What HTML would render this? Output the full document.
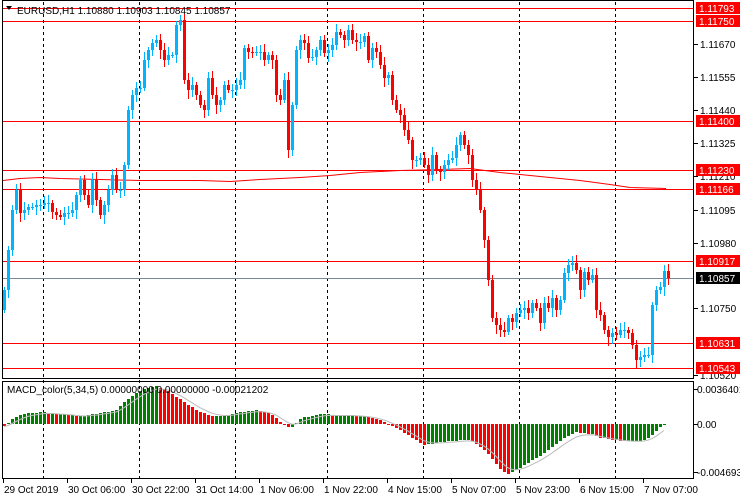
<!DOCTYPE html>
<html><head><meta charset="utf-8"><style>
html,body{margin:0;padding:0;background:#fff;}
svg{display:block;font-family:"Liberation Sans",Tahoma,sans-serif;}
</style></head><body>
<svg id="s" width="740" height="500" xmlns="http://www.w3.org/2000/svg"></svg>
<script>
(function(){
var s=document.getElementById('s');var h='';
h+='<rect x="0" y="0" width="740" height="500" fill="#fff"/>';
[43,139,235,327,423,519,615].forEach(function(x){h+='<line x1="'+(x+.5)+'" y1="2" x2="'+(x+.5)+'" y2="478" stroke="#000" stroke-dasharray="3,3"/>';});
var ma=[[3,180],[20,178],[40,177],[60,178],[100,179],[140,180],[200,180],[230,181],[260,179],[300,177],[330,175],[360,172],[400,170],[440,169],[470,168],[500,172],[540,176],[580,180],[610,184],[630,187],[666,188]];
h+='<polyline fill="none" stroke="#f00" points="'+ma.map(function(p){return p[0]+','+(p[1]+.5)}).join(' ')+'"/>';
[8,21,121,170,189,261,343,368].forEach(function(y){h+='<line x1="2" y1="'+(y+.5)+'" x2="694" y2="'+(y+.5)+'" stroke="#f00"/>';});
h+='<line x1="2" y1="278.5" x2="694" y2="278.5" stroke="#778899"/>';
var c=[290,250,210,190,213,210,207,207,205,205,203,203,212,215,217,213,213,210,195,180,195,205,180,200,215,205,190,175,190,190,165,110,95,88,88,60,50,43,40,50,60,55,55,25,20,80,90,85,95,105,110,78,95,105,100,85,90,90,85,80,48,52,53,52,52,60,55,60,95,100,80,150,105,50,40,43,58,57,50,40,53,50,45,32,35,40,30,40,42,42,36,60,48,52,65,78,75,100,110,115,130,140,160,160,158,165,175,155,170,172,165,160,158,145,135,145,155,180,190,210,240,280,318,325,330,332,318,322,313,310,308,313,303,308,323,303,308,298,310,300,273,265,263,270,290,272,280,275,310,315,330,337,333,335,330,330,333,345,360,357,355,355,305,290,287,271,278];
var prev=c[0]+20;
for(var i=0;i<c.length;i++){var cx=3+i*4;var o=prev,cl=c[i];var tp=Math.min(o,cl),bt=Math.max(o,cl);
var cc=cl<o?'#00B4FF':'#f00';if(Math.abs(o-cl)<1){cc='#00B4FF';}
var wt=tp-3-((i*7)%6),wb=bt+3+((i*5)%7);
h+='<rect x="'+(cx+1)+'" y="'+wt+'" width="1" height="'+(wb-wt)+'" fill="'+cc+'"/>';
h+='<rect x="'+cx+'" y="'+tp+'" width="3" height="'+Math.max(1,bt-tp)+'" fill="'+cc+'"/>';prev=cl;}
h+='<rect x="2.5" y="0.5" width="691" height="378" fill="none" stroke="#000"/>';
h+='<rect x="2.5" y="381.5" width="691" height="97" fill="none" stroke="#000"/>';
var kp=[[3,426],[10,420],[20,414],[40,412],[60,414],[80,416],[100,413],[115,410],[125,400],[140,390],[155,386],[165,390],[180,400],[195,410],[210,416],[225,416],[240,412],[255,410],[270,414],[282,424],[290,428],[300,418],[320,414],[340,415],[365,416],[380,420],[395,428],[410,437],[423,445],[440,442],[460,440],[470,440],[485,452],[500,470],[507,474],[520,467],[540,455],[560,440],[575,432],[590,434],[600,438],[620,441],[640,441],[650,436],[660,426],[666,421]];
function mv(x){for(var k=0;k<kp.length-1;k++){if(x>=kp[k][0]&&x<=kp[k+1][0]){var t=(x-kp[k][0])/(kp[k+1][0]-kp[k][0]);return kp[k][1]+t*(kp[k+1][1]-kp[k][1]);}}return kp[kp.length-1][1];}
var z=424,pv=mv(0),sig=[];var sv=mv(3);
for(var mx=3;mx<=664;mx+=4){var v=Math.round(mv(mx));var mc=(v<pv)?'#008000':'#f00';if(v==pv)mc='#008000';
h+='<rect x="'+mx+'" y="'+Math.min(v,z)+'" width="3" height="'+Math.max(1,Math.abs(v-z))+'" fill="'+mc+'"/>';pv=v;sv=sv+(v-sv)*0.33;sig.push((mx+1)+','+(sv+0.5).toFixed(1));}
h+='<polyline fill="none" stroke="#bbb" points="'+sig.join(' ')+'"/>';
h+='<polygon points="6,6 12,6 9,10" fill="#000"/>';
h+='<text x="17" y="14" font-size="10" fill="#000">EURUSD,H1  1.10880 1.10903 1.10845 1.10857</text>';
h+='<text x="7" y="393" font-size="10" fill="#000">MACD_color(5,34,5) 0.00000000 0.00000000 -0.00021202</text>';
[[44,'1.11670'],[77,'1.11555'],[110,'1.11440'],[143,'1.11325'],[176,'1.11210'],[210,'1.11095'],[243,'1.10980'],[308,'1.10750'],[375,'1.10520']].forEach(function(p){h+='<line x1="694" y1="'+(p[0]+.5)+'" x2="698" y2="'+(p[0]+.5)+'" stroke="#000"/><text x="700" y="'+(p[0]+4)+'" font-size="10">'+p[1]+'</text>';});
[[8,'1.11793'],[21,'1.11750'],[121,'1.11400'],[170,'1.11230'],[189,'1.11166'],[261,'1.10917'],[343,'1.10631'],[368,'1.10543']].forEach(function(p){h+='<rect x="696" y="'+(p[0]-6)+'" width="44" height="12" fill="#f00"/><text x="699" y="'+(p[0]+4)+'" font-size="10" fill="#fff">'+p[1]+'</text>';});
h+='<rect x="696" y="272" width="44" height="12" fill="#000"/><text x="699" y="282" font-size="10" fill="#fff">1.10857</text>';
[[389,'0.0036401'],[424,'0.00'],[472,'-0.004693']].forEach(function(p){h+='<line x1="694" y1="'+(p[0]+.5)+'" x2="698" y2="'+(p[0]+.5)+'" stroke="#000"/><text x="697" y="'+(p[0]+4)+'" font-size="10">'+p[1]+'</text>';});
[[3,'29 Oct 2019'],[67,'30 Oct 06:00'],[131,'30 Oct 22:00'],[195,'31 Oct 14:00'],[259,'1 Nov 06:00'],[323,'1 Nov 22:00'],[387,'4 Nov 15:00'],[451,'5 Nov 07:00'],[515,'5 Nov 23:00'],[579,'6 Nov 15:00'],[643,'7 Nov 07:00']].forEach(function(p){h+='<line x1="'+(p[0]+.5)+'" y1="479" x2="'+(p[0]+.5)+'" y2="483" stroke="#000"/><text x="'+(p[0]+1)+'" y="493" font-size="10">'+p[1]+'</text>';});
s.innerHTML=h;
})();
</script>
</body></html>
